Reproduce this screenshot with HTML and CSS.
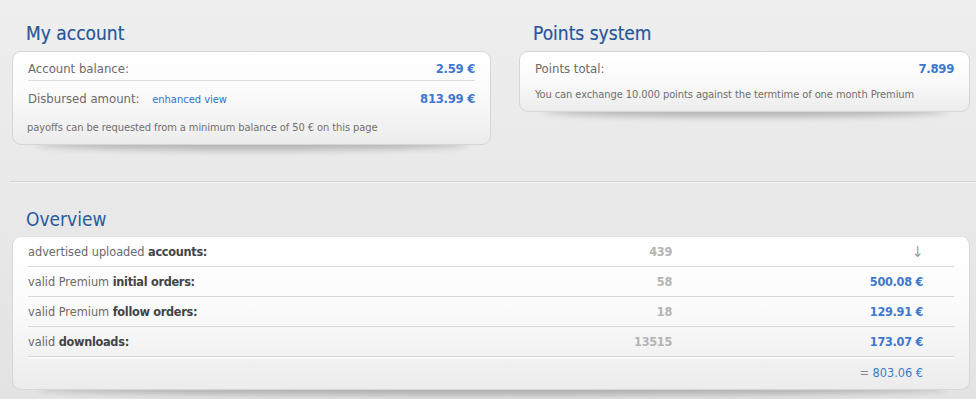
FILE: index.html
```html
<!DOCTYPE html>
<html>
<head>
<meta charset="utf-8">
<link rel="stylesheet" href="styles.css">
</head>
<body>
<div class="top">
  <section class="panel">
    <h2 class="title">My account</h2>
    <div class="card">
      <div class="row sep">
        <span class="label">Account balance:</span>
        <span class="amount">2.59 €</span>
      </div>
      <div class="row">
        <span class="label">Disbursed amount: <a class="link" href="#">enhanced view</a></span>
        <span class="amount">813.99 €</span>
      </div>
      <p class="note note-account">payoffs can be requested from a minimum balance of 50 € on this page</p>
    </div>
  </section>
  <section class="panel">
    <h2 class="title">Points system</h2>
    <div class="card">
      <div class="row">
        <span class="label">Points total:</span>
        <span class="amount">7.899</span>
      </div>
      <p class="note note-points">You can exchange 10.000 points against the termtime of one month Premium</p>
    </div>
  </section>
</div>
<hr class="divider">
<section class="overview">
  <h2 class="title">Overview</h2>
  <div class="card table">
    <div class="trow">
      <span class="tlabel">advertised uploaded <b>accounts:</b></span>
      <span class="count">439</span>
      <span class="value arrow">↓</span>
    </div>
    <div class="trow">
      <span class="tlabel">valid Premium <b>initial orders:</b></span>
      <span class="count">58</span>
      <span class="value">500.08 €</span>
    </div>
    <div class="trow">
      <span class="tlabel">valid Premium <b>follow orders:</b></span>
      <span class="count">18</span>
      <span class="value">129.91 €</span>
    </div>
    <div class="trow last">
      <span class="tlabel">valid <b>downloads:</b></span>
      <span class="count">13515</span>
      <span class="value">173.07 €</span>
    </div>
    <div class="trow total">
      <span class="tlabel"></span>
      <span class="count"></span>
      <span class="value"><span class="eq">=</span> 803.06 €</span>
    </div>
  </div>
</section>
</body>
</html>
```
FILE: styles.css
```css
html, body {
  margin: 0;
  padding: 0;
}
body {
  width: 976px;
  height: 399px;
  overflow: hidden;
  background: linear-gradient(#eeeeee, #e3e3e3);
  font-family: "DejaVu Sans Condensed", "DejaVu Sans", sans-serif;
  color: #6a6a6a;
}
.top {
  display: grid;
  grid-template-columns: 479px 451px;
  column-gap: 28px;
  padding: 20px 0 0 12px;
}
.title {
  margin: 0 0 0 14px;
  height: 31px;
  font-family: "DejaVu Sans Condensed", "DejaVu Sans", sans-serif;
  font-weight: normal;
  font-size: 19px;
  line-height: 27px;
  color: #27579b;
  -webkit-text-stroke: 0.2px #27579b;
}
.card {
  position: relative;
  background: linear-gradient(#ffffff 0%, #fbfbfb 45%, #ececec 100%);
  border: 1px solid #d6d6d6;
  border-radius: 9px;
  padding: 5px 15px 0 15px;
}
.card::after {
  content: "";
  position: absolute;
  left: 24px;
  right: 22px;
  bottom: 2px;
  height: 12px;
  border-radius: 50%;
  box-shadow: 0 8px 7px rgba(0, 0, 0, 0.24);
  z-index: -1;
}
.panel {
  position: relative;
  z-index: 0;
}
.row {
  display: flex;
  justify-content: space-between;
  align-items: baseline;
  height: 22px;
  line-height: 23px;
  font-size: 13px;
}
.row.sep {
  border-bottom: 1px solid #dcdcdc;
  padding-bottom: 1px;
  margin-bottom: 6px;
}
.label {
  color: #6a6a6a;
}
.link {
  margin-left: 9px;
  font-size: 11px;
  color: #3571c9;
  text-decoration: none;
}
.amount {
  font-weight: bold;
  letter-spacing: -0.3px;
  color: #3d78cf;
}
.note {
  margin: 0;
  font-size: 11px;
  letter-spacing: -0.08px;
  line-height: 16px;
  color: #707070;
}
.note-account {
  margin-top: 11px;
  margin-left: -1px;
  padding-bottom: 8px;
}
.note-points {
  margin-top: 8px;
  padding-bottom: 8px;
}
.divider {
  margin: 36px 0 0 10px;
  height: 0;
  border: 0;
  border-top: 1px solid #d3d3d3;
  border-bottom: 1px solid #f3f3f3;
}
.overview {
  position: relative;
  z-index: 0;
  padding: 23px 6px 0 12px;
}
.overview .title {
  height: 30px;
  -webkit-text-stroke: 0;
  color: #2a5b9d;
}
.table {
  padding: 0 15px 2px 15px;
  border-top-color: #e2e2e2;
}
.trow {
  display: flex;
  align-items: center;
  height: 29px;
  border-bottom: 1px solid #dadada;
  font-size: 12.6px;
  color: #6a6a6a;
}
.trow b {
  color: #444444;
  letter-spacing: -0.3px;
}
.trow.last {
  border-bottom: 1px solid #d6d6d6;
  box-shadow: 0 2px 0 #fafafa;
  margin-bottom: 1px;
}
.trow.total {
  border-bottom: 0;
}
.tlabel {
  flex: 1;
}
.count {
  width: 100px;
  text-align: right;
  font-weight: bold;
  letter-spacing: -0.3px;
  color: #b4b4b4;
}
.value {
  width: 251px;
  text-align: right;
  margin-right: 31px;
  font-weight: bold;
  letter-spacing: -0.3px;
  color: #3d78cf;
}
.value.arrow {
  font-weight: normal;
  font-size: 15px;
  color: #9a9a9a;
  padding-right: 0;
}
.total .value {
  font-weight: normal;
  letter-spacing: 0;
  color: #3d78cf;
}
.eq {
  color: #888888;
}
```
